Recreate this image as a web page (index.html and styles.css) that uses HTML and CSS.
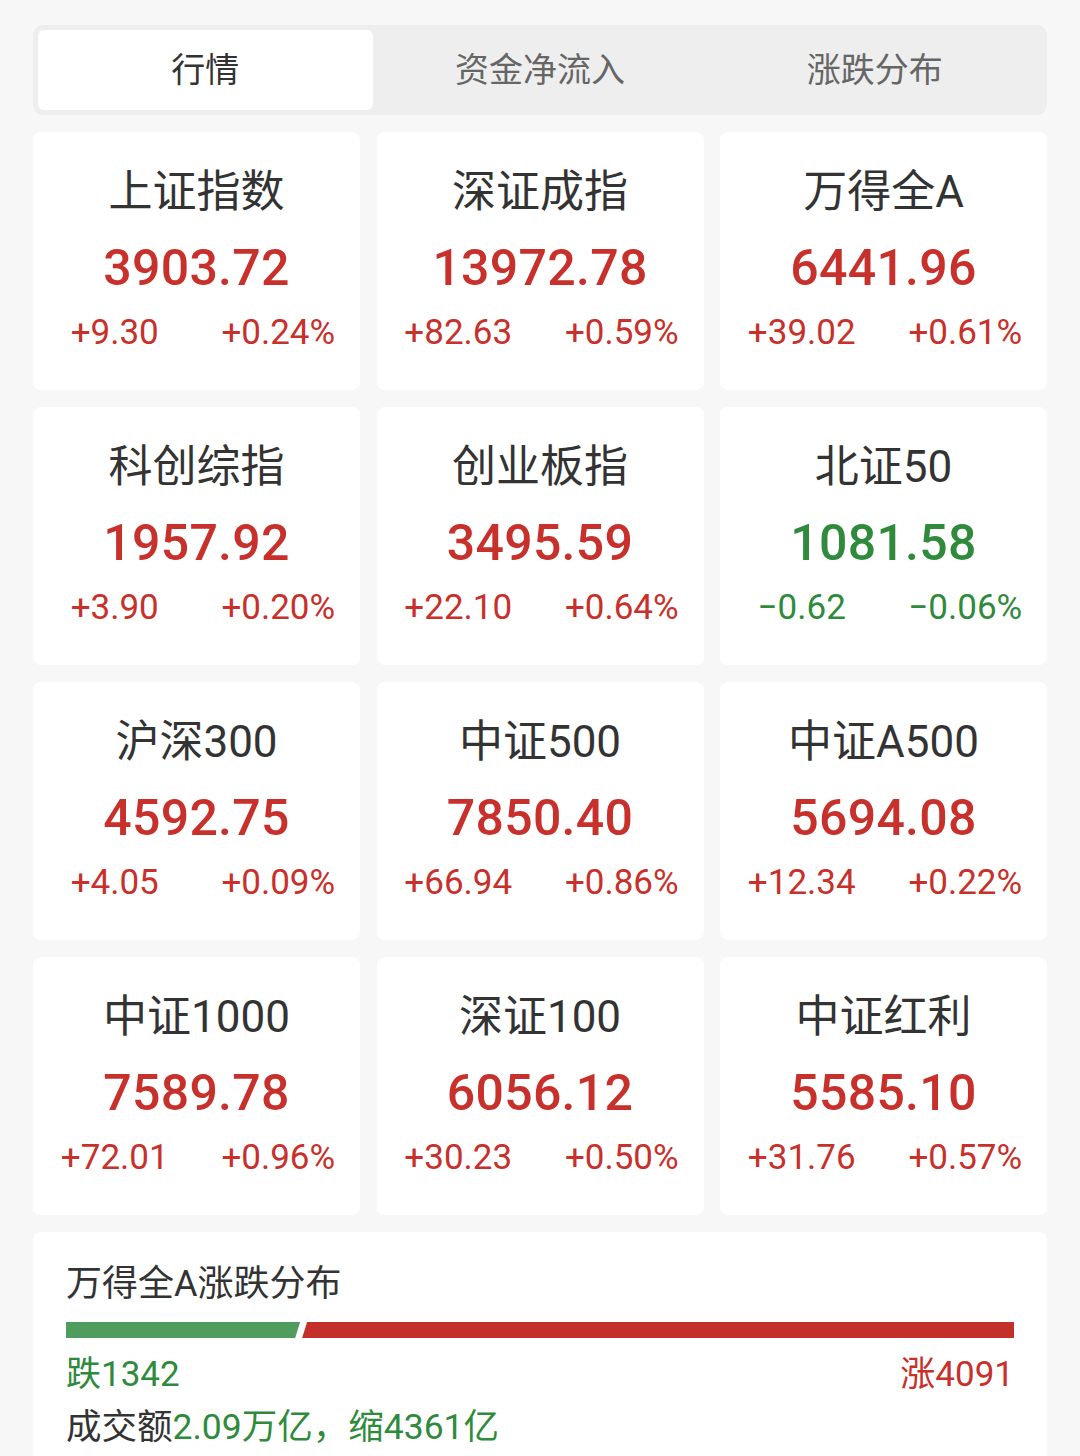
FILE: index.html
```html
<!DOCTYPE html>
<html lang="zh">
<head>
<meta charset="utf-8">
<link rel="stylesheet" href="styles.css">
</head>
<body>
<div class="page">
  <div class="tabs">
    <div class="tab active">行情</div>
    <div class="tab">资金净流入</div>
    <div class="tab">涨跌分布</div>
  </div>
  <div class="grid">
    <div class="card up"><div class="name">上证指数</div><div class="val">3903.72</div><div class="chg"><span>+9.30</span><span>+0.24%</span></div></div>
    <div class="card up"><div class="name">深证成指</div><div class="val">13972.78</div><div class="chg"><span>+82.63</span><span>+0.59%</span></div></div>
    <div class="card up"><div class="name">万得全A</div><div class="val">6441.96</div><div class="chg"><span>+39.02</span><span>+0.61%</span></div></div>
    <div class="card up"><div class="name">科创综指</div><div class="val">1957.92</div><div class="chg"><span>+3.90</span><span>+0.20%</span></div></div>
    <div class="card up"><div class="name">创业板指</div><div class="val">3495.59</div><div class="chg"><span>+22.10</span><span>+0.64%</span></div></div>
    <div class="card down"><div class="name">北证50</div><div class="val">1081.58</div><div class="chg"><span>−0.62</span><span>−0.06%</span></div></div>
    <div class="card up"><div class="name">沪深300</div><div class="val">4592.75</div><div class="chg"><span>+4.05</span><span>+0.09%</span></div></div>
    <div class="card up"><div class="name">中证500</div><div class="val">7850.40</div><div class="chg"><span>+66.94</span><span>+0.86%</span></div></div>
    <div class="card up"><div class="name">中证A500</div><div class="val">5694.08</div><div class="chg"><span>+12.34</span><span>+0.22%</span></div></div>
    <div class="card up"><div class="name">中证1000</div><div class="val">7589.78</div><div class="chg"><span>+72.01</span><span>+0.96%</span></div></div>
    <div class="card up"><div class="name">深证100</div><div class="val">6056.12</div><div class="chg"><span>+30.23</span><span>+0.50%</span></div></div>
    <div class="card up"><div class="name">中证红利</div><div class="val">5585.10</div><div class="chg"><span>+31.76</span><span>+0.57%</span></div></div>
  </div>
  <div class="dist">
    <div class="dist-title">万得全A涨跌分布</div>
    <div class="bar">
      <div class="bar-down" style="width:24.7%"></div>
      <div class="bar-up"></div>
    </div>
    <div class="counts">
      <span class="green">跌1342</span>
      <span class="red">涨4091</span>
    </div>
    <div class="volume">成交额<span class="green">2.09万亿，缩4361亿</span></div>
  </div>
</div>
</body>
</html>
```

FILE: styles.css
```css
html, body {
  margin: 0;
  padding: 0;
  background: #f7f7f7;
}
body {
  font-family: Roboto, "Noto Sans CJK SC", sans-serif;
  color: #333;
}
.page {
  padding: 25px 33px 0 33px;
  display: flex;
  flex-direction: column;
  gap: 17px;
}
.tabs {
  background: #eeeeee;
  border-radius: 10px;
  padding: 5px;
  display: flex;
  height: 80px;
}
.tab {
  flex: 1;
  display: flex;
  align-items: center;
  justify-content: center;
  font-size: 34px;
  color: #666;
  font-family: "Noto Sans CJK SC", sans-serif;
  padding-bottom: 6px;
  box-sizing: border-box;
}
.tab.active {
  background: #fff;
  border-radius: 6px;
  color: #333;
}
.grid {
  display: grid;
  grid-template-columns: repeat(3, 1fr);
  gap: 17px 16.5px;
}
.card {
  background: #fff;
  border-radius: 8px;
  height: 258px;
  display: flex;
  flex-direction: column;
  align-items: center;
  box-sizing: border-box;
  padding-top: 34px;
}
.name {
  font-size: 44px;
  line-height: 52px;
  height: 52px;
  color: #333;
  font-family: Roboto, "Noto Sans CJK SC", sans-serif;
}
.val {
  margin-top: 20px;
  font-size: 50px;
  line-height: 60px;
  font-weight: 500;
  letter-spacing: 0.3px;
}
.chg {
  margin-top: 13px;
  width: 100%;
  display: flex;
  font-size: 35px;
  line-height: 44px;
}
.chg span {
  flex: 1;
  text-align: center;
}
.up .val, .up .chg { color: #c8302b; }
.down .val, .down .chg { color: #2f8a3c; }
.dist {
  background: #fff;
  border-radius: 8px 8px 0 0;
  padding: 28px 33px 40px 33px;
  display: flex;
  flex-direction: column;
}
.dist-title {
  font-size: 36px;
  line-height: 48px;
  color: #333;
  font-family: Roboto, "Noto Sans CJK SC", sans-serif;
}
.bar {
  margin-top: 14px;
  height: 16px;
  display: flex;
  gap: 2px;
}
.bar-down {
  background: #4e9c5e;
  clip-path: polygon(0 0, 100% 0, calc(100% - 5px) 100%, 0 100%);
}
.bar-up {
  flex: 1;
  background: #c3302a;
  clip-path: polygon(5px 0, 100% 0, 100% 100%, 0 100%);
}
.counts {
  margin-top: 14px;
  display: flex;
  justify-content: space-between;
  font-size: 35px;
  line-height: 46px;
}
.volume {
  margin-top: 6px;
  font-size: 35.5px;
  line-height: 46px;
  color: #333;
}
.green { color: #2f8a3c; }
.red { color: #c8302b; }
```
